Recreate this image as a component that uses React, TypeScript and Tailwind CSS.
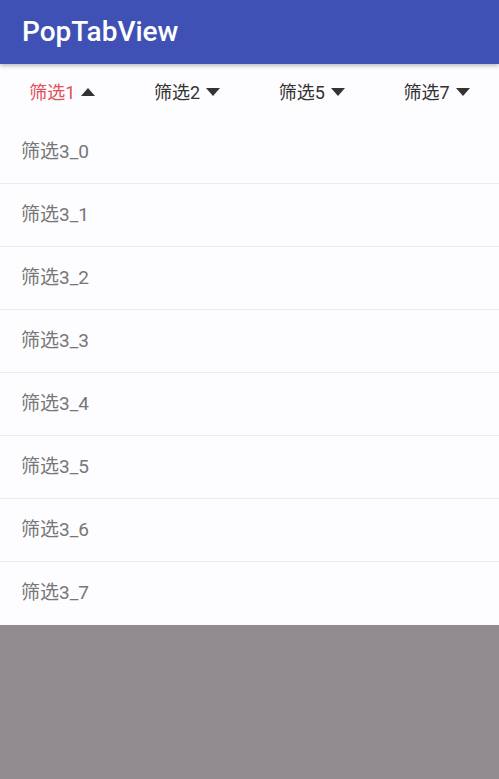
import * as React from "react"

const tabs = [
  { label: "筛选1", active: true },
  { label: "筛选2", active: false },
  { label: "筛选5", active: false },
  { label: "筛选7", active: false },
]

const items = Array.from({ length: 8 }, (_, i) => `筛选3_${i}`)

function Arrow({ up }: { up: boolean }) {
  return (
    <svg width="14" height="8" viewBox="0 0 14 8" className="ml-[6px]">
      {up ? <path d="M0 8 L7 0 L14 8 Z" fill="#333333" /> : <path d="M0 0 L14 0 L7 8 Z" fill="#333333" />}
    </svg>
  )
}

export default function App() {
  return (
    <div
      className="flex h-[779px] w-[499px] flex-col overflow-hidden bg-[#8f8b8f]"
      style={{ fontFamily: 'Roboto, "Noto Sans CJK SC", sans-serif' }}
    >
      {/* 标题栏 */}
      <div className="relative z-10 flex h-[64px] items-center bg-[#3f51b5] px-[22px] shadow-[0_2px_4px_rgba(0,0,0,0.25)]">
        <h1 className="text-[28px] font-medium text-white">PopTabView</h1>
      </div>

      {/* 筛选标签 */}
      <div className="grid h-[57px] grid-cols-4 bg-[#fdfcfe]">
        {tabs.map((tab) => (
          <div key={tab.label} className="flex items-center justify-center pb-[1px]">
            <span className={`text-[18px] ${tab.active ? "text-[#e0525a]" : "text-[#333333]"}`}>{tab.label}</span>
            <Arrow up={tab.active} />
          </div>
        ))}
      </div>

      {/* 弹出列表 */}
      <div className="flex flex-col bg-[#fdfcfe]">
        {items.map((item, i) => (
          <div
            key={item}
            className={`flex h-[63px] items-center px-[21px] ${i < items.length - 1 ? "border-b border-[#ececee]" : ""}`}
          >
            <span className="text-[19px] text-[#777777]">{item}</span>
          </div>
        ))}
      </div>
    </div>
  )
}
